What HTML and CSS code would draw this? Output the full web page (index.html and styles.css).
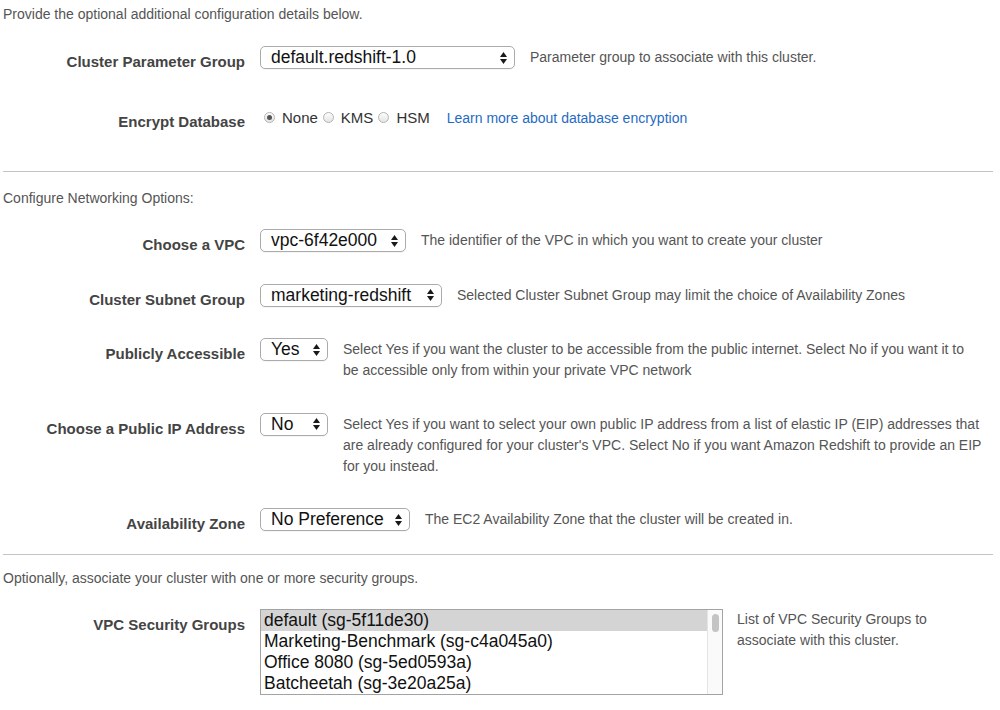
FILE: index.html
```html
<!DOCTYPE html>
<html>
<head>
<meta charset="utf-8">
<link rel="stylesheet" href="styles.css">
</head>
<body>
<div class="page">
  <p class="section-text intro">Provide the optional additional configuration details below.</p>

  <div class="form form-first">
    <div class="row">
      <div class="label">Cluster Parameter Group</div>
      <div class="select w-param"><span>default.redshift-1.0</span><svg class="arrows" width="7" height="12" viewBox="0 0 7 12"><polygon points="0,5 3.5,0 7,5" /><polygon points="0,7 3.5,12 7,7" /></svg></div>
      <div class="desc">Parameter group to associate with this cluster.</div>
    </div>
    <div class="row row-encrypt">
      <div class="label">Encrypt Database</div>
      <div class="radios">
        <span class="radio checked"></span><span class="radio-text">None</span>
        <span class="radio"></span><span class="radio-text">KMS</span>
        <span class="radio"></span><span class="radio-text">HSM</span>
        <a class="link" href="#">Learn more about database encryption</a>
      </div>
    </div>
  </div>

  <hr class="sep sep-1">
  <p class="section-text configure">Configure Networking Options:</p>

  <div class="form form-net">
    <div class="row">
      <div class="label">Choose a VPC</div>
      <div class="select w-vpc"><span>vpc-6f42e000</span><svg class="arrows" width="7" height="12" viewBox="0 0 7 12"><polygon points="0,5 3.5,0 7,5" /><polygon points="0,7 3.5,12 7,7" /></svg></div>
      <div class="desc">The identifier of the VPC in which you want to create your cluster</div>
    </div>
    <div class="row">
      <div class="label">Cluster Subnet Group</div>
      <div class="select w-subnet"><span>marketing-redshift</span><svg class="arrows" width="7" height="12" viewBox="0 0 7 12"><polygon points="0,5 3.5,0 7,5" /><polygon points="0,7 3.5,12 7,7" /></svg></div>
      <div class="desc">Selected Cluster Subnet Group may limit the choice of Availability Zones</div>
    </div>
    <div class="row">
      <div class="label">Publicly Accessible</div>
      <div class="select w-yn"><span>Yes</span><svg class="arrows" width="7" height="12" viewBox="0 0 7 12"><polygon points="0,5 3.5,0 7,5" /><polygon points="0,7 3.5,12 7,7" /></svg></div>
      <div class="desc desc-public">Select Yes if you want the cluster to be accessible from the public internet. Select No if you want it to be accessible only from within your private VPC network</div>
    </div>
    <div class="row">
      <div class="label">Choose a Public IP Address</div>
      <div class="select w-yn"><span>No</span><svg class="arrows" width="7" height="12" viewBox="0 0 7 12"><polygon points="0,5 3.5,0 7,5" /><polygon points="0,7 3.5,12 7,7" /></svg></div>
      <div class="desc">Select Yes if you want to select your own public IP address from a list of elastic IP (EIP) addresses that are already configured for your cluster's VPC. Select No if you want Amazon Redshift to provide an EIP for you instead.</div>
    </div>
    <div class="row">
      <div class="label">Availability Zone</div>
      <div class="select w-az"><span>No Preference</span><svg class="arrows" width="7" height="12" viewBox="0 0 7 12"><polygon points="0,5 3.5,0 7,5" /><polygon points="0,7 3.5,12 7,7" /></svg></div>
      <div class="desc">The EC2 Availability Zone that the cluster will be created in.</div>
    </div>
  </div>

  <hr class="sep sep-2">
  <p class="section-text optionally">Optionally, associate your cluster with one or more security groups.</p>

  <div class="form form-sg">
    <div class="row">
      <div class="label">VPC Security Groups</div>
      <div class="listbox">
        <div class="list-items">
          <div class="list-item selected">default (sg-5f11de30)</div>
          <div class="list-item">Marketing-Benchmark (sg-c4a045a0)</div>
          <div class="list-item">Office 8080 (sg-5ed0593a)</div>
          <div class="list-item">Batcheetah (sg-3e20a25a)</div>
        </div>
        <div class="scrollbar"><div class="thumb"></div></div>
      </div>
      <div class="desc desc-list">List of VPC Security Groups to associate with this cluster.</div>
    </div>
  </div>
</div>
</body>
</html>
```

FILE: styles.css
```css
html, body {
  margin: 0;
  padding: 0;
  background: #ffffff;
}

body {
  font-family: "Liberation Sans", Arial, Helvetica, sans-serif;
  color: #444;
}

.page {
  padding: 0 7px 0 3px;
}

.section-text {
  margin: 0;
  font-size: 14px;
  line-height: 21px;
  color: #555;
}

.intro {
  padding-top: 4px;
}

.form {
  display: flex;
  flex-direction: column;
  gap: 31.5px;
}

.form-first {
  margin-top: 21px;
  gap: 37px;
}

.form-net {
  margin-top: 20.5px;
}

.form-sg {
  margin-top: 20.5px;
}

.row {
  display: flex;
  align-items: flex-start;
}

.label {
  width: 242px;
  flex: none;
  text-align: right;
  font-size: 15px;
  font-weight: bold;
  line-height: 15px;
  padding-top: 8px;
  color: #444;
  margin-right: 15px;
}

.select {
  flex: none;
  box-sizing: border-box;
  height: 23px;
  display: flex;
  align-items: center;
  justify-content: space-between;
  padding: 0 7px 0 10px;
  border: 1px solid #ababab;
  border-radius: 5px;
  background: #fff;
  box-shadow: 0 1px 0 rgba(0, 0, 0, 0.04);
  font-size: 17.5px;
  color: #111;
  white-space: nowrap;
  margin-right: 15px;
}

.select span {
  line-height: 21px;
}

.arrows {
  flex: none;
  fill: #1a1a1a;
}

.w-param { width: 255px; }
.w-vpc { width: 146px; }
.w-subnet { width: 182px; }
.w-yn { width: 68px; }
.w-az { width: 150px; }

.desc {
  flex: 1;
  font-size: 14px;
  line-height: 21px;
  padding-top: 1px;
  color: #555;
}

.desc-public {
  flex: none;
  max-width: 630px;
}

.radios {
  height: 23px;
  display: flex;
  align-items: center;
  padding-left: 4px;
  font-size: 15px;
  color: #333;
}

.radio {
  box-sizing: border-box;
  width: 11px;
  height: 11px;
  border-radius: 50%;
  border: 1px solid #b4b4b4;
  background: linear-gradient(#fdfdfd, #e4e4e4);
  margin-right: 7px;
  display: flex;
  align-items: center;
  justify-content: center;
}

.radio.checked::after {
  content: "";
  width: 5px;
  height: 5px;
  border-radius: 50%;
  background: #555;
}

.radio-text {
  margin-right: 5px;
}

.link {
  margin-left: 12px;
  font-size: 14px;
  color: #1f6bc4;
  text-decoration: none;
}

.sep {
  border: 0;
  height: 1px;
  background: #c4c4c4;
  margin: 0;
}

.sep-1 {
  margin-top: 42px;
}

.configure {
  margin-top: 15.5px;
}

.sep-2 {
  margin-top: 23px;
}

.optionally {
  margin-top: 12.5px;
}

.listbox {
  flex: none;
  width: 463px;
  height: 86px;
  box-sizing: border-box;
  border: 1px solid #a3a3a3;
  display: flex;
  margin-right: 14px;
  background: #fff;
}

.list-items {
  flex: 1;
}

.list-item {
  height: 21px;
  line-height: 21px;
  padding-left: 3px;
  font-size: 17.5px;
  color: #111;
  white-space: nowrap;
}

.list-item.selected {
  background: #d4d4d4;
}

.scrollbar {
  width: 15px;
  flex: none;
  border-left: 1px solid #e4e4e4;
  background: #fafafa;
  display: flex;
  justify-content: center;
  padding-top: 4px;
  box-sizing: border-box;
}

.thumb {
  width: 7px;
  height: 18px;
  border-radius: 3.5px;
  background: #c4c4c4;
}

.desc-list {
  flex: none;
  max-width: 215px;
  padding-top: 0;
}
```
